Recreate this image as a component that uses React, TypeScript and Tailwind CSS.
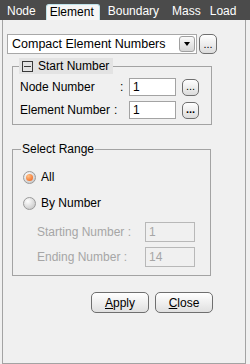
const tabs = [
  { label: "Node", cls: "ml-[4px] px-[3px] text-white" },
  { label: "Element", cls: "ml-[7px] pl-[3px] pr-[5px] bg-[#f6f6f6] text-black rounded-t-[3px] border-x border-t border-[#bfe3ea]" },
  { label: "Boundary", cls: "ml-[5px] px-[3px] text-white" },
  { label: "Mass", cls: "ml-[7px] px-[3px] text-white" },
  { label: "Load", cls: "ml-[3px] px-[3px] text-white" },
]

const smallBtn =
  "flex items-end justify-center rounded-[5px] border border-[#6f6f6f] bg-linear-to-b from-white to-[#dcdcdc] leading-none text-[11px] pb-[3px]"

function Radio({ checked }: { checked: boolean }) {
  return (
    <span className="w-[13px] h-[13px] rounded-full border border-[#9a9a9a] bg-[radial-gradient(circle_at_35%_30%,#ffffff,#bdbdbd)] flex items-center justify-center shrink-0">
      {checked && (
        <span className="w-[7px] h-[7px] rounded-full bg-[radial-gradient(circle_at_35%_30%,#ffc48a,#ee5a12)]" />
      )}
    </span>
  )
}

export default function App() {
  return (
    <div className="w-[250px] h-[364px] bg-[#f0f0f0] flex flex-col font-['Liberation_Sans',Arial,sans-serif] text-[12px] text-black">
      {/* Tab bar */}
      <div className="h-[20px] shrink-0 bg-[#4b4b4b] flex items-end">
        {tabs.map((t) => (
          <span key={t.label} className={`h-[16px] leading-[15px] ${t.cls}`}>
            {t.label}
          </span>
        ))}
      </div>

      {/* Panel */}
      <div className="flex-1 ml-[2px] mr-[4px] border-x border-b border-[#a3a3a3] pt-[14px] pl-[4px]">
        {/* Dropdown */}
        <div className="flex items-center gap-[2px]">
          <div className="w-[190px] h-[20px] bg-white border border-[#a8a8a8] flex items-center justify-between pl-[4px] pr-[1px]">
            <span className="text-[12.5px] leading-none">Compact Element Numbers</span>
            <span className="w-[16px] h-[16px] rounded-[3px] border border-[#a0a0a0] bg-linear-to-b from-[#fafafa] to-[#d6d6d6] flex items-center justify-center">
              <span className="w-0 h-0 border-x-[3.5px] border-x-transparent border-t-[4px] border-t-black" />
            </span>
          </div>
          <button className={`w-[18px] h-[20px] ${smallBtn}`}>...</button>
        </div>

        {/* Start Number */}
        <fieldset className="ml-[5px] mt-[4px] w-[200px] border border-[#a3a3a3]">
          <legend className="ml-[6px] h-[16px] w-[94px] bg-[#e3e3e3] flex items-center pl-[3px]">
            <span className="w-[11px] h-[11px] border border-[#3a3a3a] flex items-center justify-center">
              <span className="w-[7px] h-[1px] bg-[#3a3a3a]" />
            </span>
            <span className="ml-[5px] leading-none">Start Number</span>
          </legend>
          <div className="pl-[7px] pt-[4px] pb-[5px] flex flex-col gap-[5px]">
            <div className="flex items-center h-[18px]">
              <div className="w-[109px] flex">
                <span className="w-[100px]">Node Number</span>
                <span>:</span>
              </div>
              <div className="w-[47px] h-[18px] bg-white border border-[#a3a3a3] pl-[3px] leading-[16px]">1</div>
              <button className={`ml-[6px] w-[17px] h-[17px] ${smallBtn}`}>...</button>
            </div>
            <div className="flex items-center h-[18px]">
              <div className="w-[109px] flex">
                <span>Element Number</span>
                <span className="ml-[4px]">:</span>
              </div>
              <div className="w-[47px] h-[18px] bg-white border border-[#a3a3a3] pl-[3px] leading-[16px]">1</div>
              <button className={`ml-[6px] w-[17px] h-[17px] font-bold ${smallBtn}`}>...</button>
            </div>
          </div>
        </fieldset>

        {/* Select Range */}
        <fieldset className="ml-[5px] mt-[16px] w-[199px] border border-[#a3a3a3]">
          <legend className="ml-[8px] px-[1px] h-[16px] leading-[16px]">Select Range</legend>
          <div className="pt-[12px] pb-[8px] pl-[10px] flex flex-col">
            <label className="flex items-center h-[16px] gap-[5px]">
              <Radio checked />
              <span>All</span>
            </label>
            <label className="flex items-center h-[16px] gap-[5px] mt-[10px]">
              <Radio checked={false} />
              <span>By Number</span>
            </label>
            <div className="flex items-center mt-[11px] ml-[14px] text-[#a6a6a6]">
              <span className="w-[108px]">Starting Number :</span>
              <div className="w-[50px] h-[20px] border border-[#b8b8b8] pl-[3px] leading-[18px]">1</div>
            </div>
            <div className="flex items-center mt-[5px] ml-[14px] text-[#a6a6a6]">
              <span className="w-[108px]">Ending Number :</span>
              <div className="w-[50px] h-[20px] border border-[#b8b8b8] pl-[3px] leading-[18px]">14</div>
            </div>
          </div>
        </fieldset>

        {/* Buttons */}
        <div className="flex gap-[6px] ml-[84px] mt-[16px]">
          <button className="w-[58px] h-[21px] rounded-[5px] border border-[#6f6f6f] bg-linear-to-b from-white to-[#e0e0e0]">
            <span className="underline">A</span>pply
          </button>
          <button className="w-[58px] h-[21px] rounded-[5px] border border-[#6f6f6f] bg-linear-to-b from-white to-[#e0e0e0]">
            <span className="underline">C</span>lose
          </button>
        </div>
      </div>
    </div>
  )
}
